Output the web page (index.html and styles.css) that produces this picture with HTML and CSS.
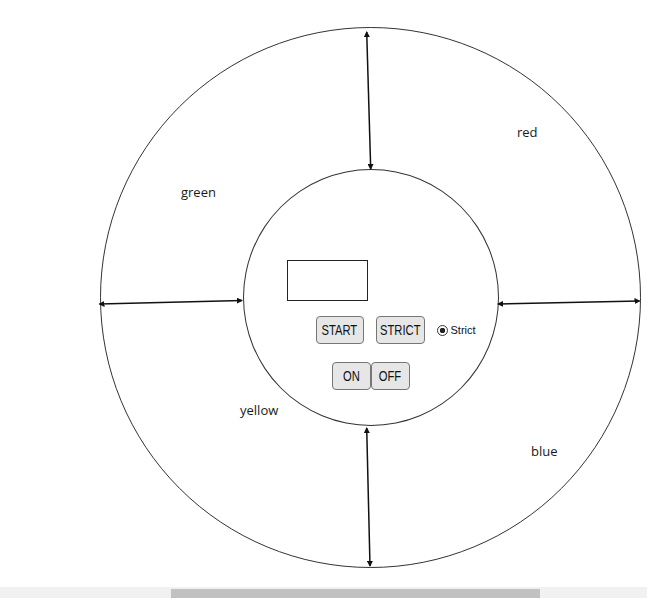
FILE: index.html
```html
<!DOCTYPE html>
<html lang="en">
<head>
  <meta charset="UTF-8">
  <meta name="viewport" content="width=device-width, initial-scale=1.0">
  <title>Simon Game</title>
  <link rel="stylesheet" href="styles.css">
</head>
<body>
  <div class="page">
    <div class="stage">
      <div class="ring">
        <!-- quadrant labels -->
        <span class="label label-green">green</span>
        <span class="label label-red">red</span>
        <span class="label label-yellow">yellow</span>
        <span class="label label-blue">blue</span>

        <!-- centre console -->
        <div class="hub">
          <div class="count-display"></div>
          <div class="controls">
            <button class="btn btn-start"><span class="btn-text">START</span></button>
            <button class="btn btn-strict"><span class="btn-text">STRICT</span></button>
            <label class="strict-toggle">
              <input type="radio" checked>
              <span>Strict</span>
            </label>
          </div>
          <div class="power"><button class="btn btn-on"><span class="btn-text">ON</span></button><button class="btn btn-off"><span class="btn-text">OFF</span></button></div>
        </div>

        <!-- dividers between the quadrants -->
        <svg class="spokes" viewBox="0 0 541 541" width="541" height="541">
          <defs>
            <marker id="tip" viewBox="0 0 6 6" refX="5" refY="3" markerWidth="4" markerHeight="4" orient="auto-start-reverse">
              <path d="M0 0 L6 3 L0 6 Z" fill="#111"/>
            </marker>
          </defs>
          <line x1="266.7" y1="5" x2="270.7" y2="142" />
          <line x1="-0.5" y1="277" x2="142" y2="273.5" />
          <line x1="398" y1="277" x2="539.5" y2="274" />
          <line x1="266.7" y1="401" x2="270" y2="539" />
        </svg>
      </div>
    </div>
    <div class="scrollbar"><div class="thumb"></div></div>
  </div>
</body>
</html>
```

FILE: styles.css
```css
* {
  box-sizing: border-box;
  margin: 0;
  padding: 0;
}

body {
  font-family: 'Open Sans', 'Liberation Sans', sans-serif;
  background-color: white;
  color: #222;
  overflow: hidden;
}

.page {
  height: 100vh;
  display: flex;
  flex-direction: column;
}

.stage {
  flex: 1;
  padding: 27px 0 0 100px;
}

.ring {
  position: relative;
  width: 541px;
  height: 541px;
  border: 1px solid #333;
  border-radius: 50%;
  display: flex;
  align-items: center;
  justify-content: center;
}

.label {
  position: absolute;
  font-size: 13px;
  line-height: 16px;
  color: #1a1a1a;
}

.label-green { left: 80px; top: 156px; }
.label-red { left: 416px; top: 96px; }
.label-yellow { left: 139px; top: 374px; }
.label-blue { left: 430px; top: 415px; }

.hub {
  width: 256px;
  height: 257px;
  border: 1px solid #333;
  border-radius: 50%;
  display: flex;
  flex-direction: column;
  align-items: flex-start;
  padding-top: 90px;
}

.count-display {
  width: 81px;
  height: 41px;
  margin-left: 43px;
  border: 1px solid #222;
  background-color: white;
}

.controls {
  display: flex;
  align-items: center;
  margin: 15px 0 0 72px;
  gap: 12px;
}

.power {
  display: flex;
  margin: 18px 0 0 88px;
}

.btn {
  height: 28px;
  padding: 0;
  border: 1px solid #767676;
  border-radius: 4px;
  background-color: #e6e6e6;
  color: #111;
  font-family: 'Liberation Sans', Arial, sans-serif;
  font-size: 14px;
  cursor: pointer;
  display: flex;
  align-items: center;
  justify-content: center;
  overflow: hidden;
}

/* the original buttons use a narrow face; squeeze Arial metrics to match */
.btn-text {
  display: inline-block;
  transform: scaleX(0.8);
  white-space: nowrap;
}

.btn-start { width: 48px; }
.btn-strict { width: 49px; }
.btn-on { width: 39px; }
.btn-off { width: 39px; }

.strict-toggle {
  display: flex;
  align-items: center;
  gap: 3px;
  font-family: 'Liberation Sans', sans-serif;
  font-size: 11px;
  color: #111;
}

.strict-toggle input {
  appearance: none;
  width: 11px;
  height: 11px;
  border: 1px solid #333;
  border-radius: 50%;
  background: radial-gradient(circle, #222 0 2.5px, white 3px);
}

.spokes {
  position: absolute;
  left: -1px;
  top: -1px;
  overflow: visible;
  pointer-events: none;
}

.spokes line {
  stroke: #111;
  stroke-width: 1.5;
  marker-start: url(#tip);
  marker-end: url(#tip);
}

.scrollbar {
  height: 11px;
  background-color: #f1f1f1;
  padding-top: 2px;
}

.thumb {
  width: 369px;
  height: 9px;
  margin-left: 171px;
  background-color: #c1c1c1;
}
```
